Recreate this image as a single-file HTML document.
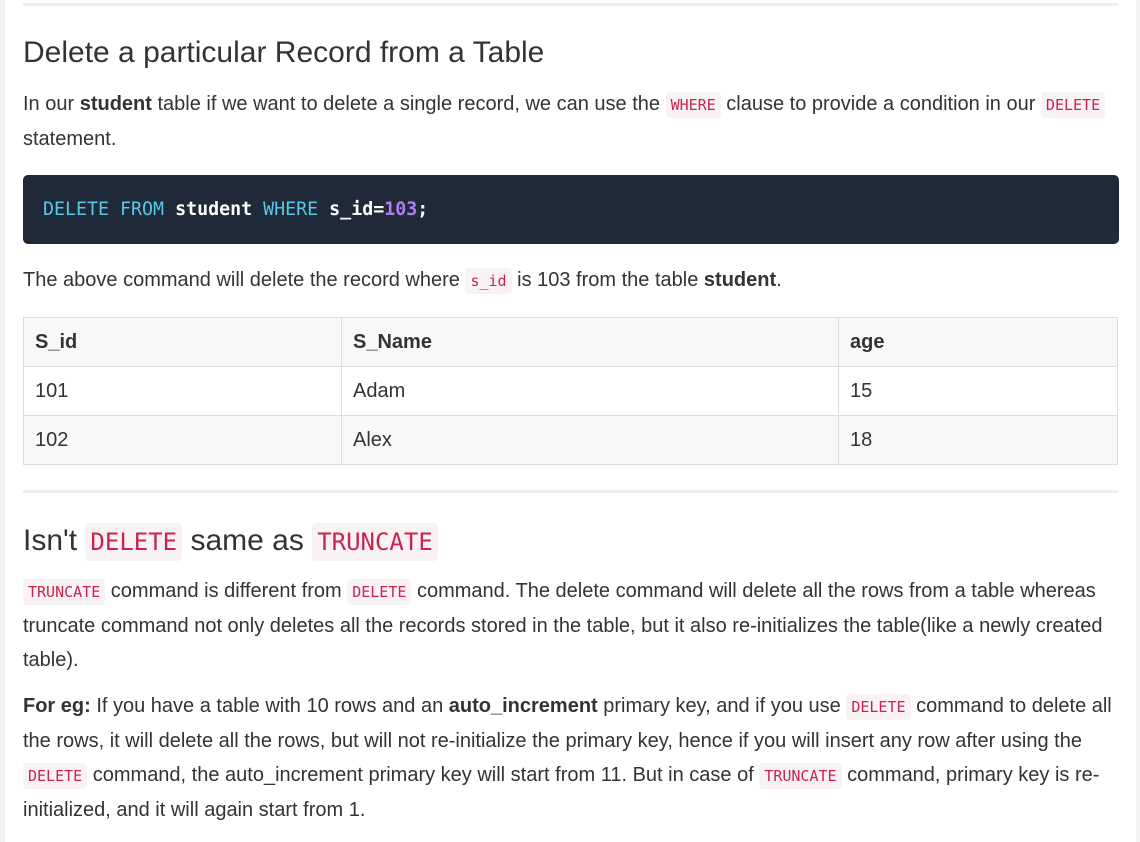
<!DOCTYPE html>
<html><head><meta charset="utf-8"><style>
html,body{margin:0;padding:0;}
body{width:1140px;height:842px;background:#f3f3f3;position:relative;overflow:hidden;font-family:"Liberation Sans",Arial,sans-serif;color:#333;}
.page{position:absolute;left:5px;top:0;width:1131px;height:842px;background:#fff;}
.a{position:absolute;left:23px;}
hr{position:absolute;left:23px;width:1096px;height:3px;background:#eee;border:0;margin:0;}
h2{margin:0;font-weight:normal;font-size:30px;line-height:36px;color:#333;white-space:nowrap;}
p{margin:0;font-size:20px;line-height:34.5px;width:1100px;}
code{font-family:"DejaVu Sans Mono","Liberation Mono",monospace;font-size:15px;line-height:1;color:#c7254e;background:#f9f2f4;padding:4px 5px;border-radius:4px;}
h2 code{font-size:24px;padding:5px 5px;}
.pre{left:23px;top:175px;width:1096px;height:69px;background:#1f2937;border-radius:5px;font-family:"DejaVu Sans Mono","Liberation Mono",monospace;font-size:18.3px;color:#fff;font-weight:bold;line-height:69px;box-sizing:border-box;padding-left:20px;}
.k{color:#56c8e8;font-weight:normal}.n{color:#b07cf0;font-weight:bold}
table{border-collapse:collapse;width:1095px;font-size:20px;}
td,th{border:1px solid #ddd;height:49px;padding:0 0 0 11px;text-align:left;box-sizing:border-box;}
th{background:#f8f8f8;}
tr.g td{background:#f8f8f8;}
</style></head><body><div class="page"></div>
<hr style="top:3px">
<div class="a" style="top:35px"><h2>Delete a particular Record from a Table</h2></div>
<div class="a" style="top:87px"><p>In our <b>student</b> table if we want to delete a single record, we can use the <code>WHERE</code> clause to provide a condition in our <code>DELETE</code> statement.</p></div>
<div class="a pre"><span class="k">DELETE FROM</span> student <span class="k">WHERE</span> s_id=<span class="n">103</span>;</div>
<div class="a" style="top:263px"><p>The above command will delete the record where <code>s_id</code> is 103 from the table <b>student</b>.</p></div>
<div class="a" style="top:317px"><table>
<tr><th style="width:318px">S_id</th><th style="width:497px">S_Name</th><th>age</th></tr>
<tr><td>101</td><td>Adam</td><td>15</td></tr>
<tr class="g"><td>102</td><td>Alex</td><td>18</td></tr>
</table></div>
<hr style="top:490px">
<div class="a" style="top:523px"><h2>Isn't <code>DELETE</code> same as <code>TRUNCATE</code></h2></div>
<div class="a" style="top:574px"><p><code>TRUNCATE</code> command is different from <code>DELETE</code> command. The delete command will delete all the rows from a table whereas truncate command not only deletes all the records stored in the table, but it also re-initializes the table(like a newly created table).</p></div>
<div class="a" style="top:689px"><p><b>For eg:</b> If you have a table with 10 rows and an <b>auto_increment</b> primary key, and if you use <code>DELETE</code> command to delete all the rows, it will delete all the rows, but will not re-initialize the primary key, hence if you will insert any row after using the <code>DELETE</code> command, the auto_increment primary key will start from 11. But in case of <code>TRUNCATE</code> command, primary key is re-initialized, and it will again start from 1.</p></div>
</body></html>
